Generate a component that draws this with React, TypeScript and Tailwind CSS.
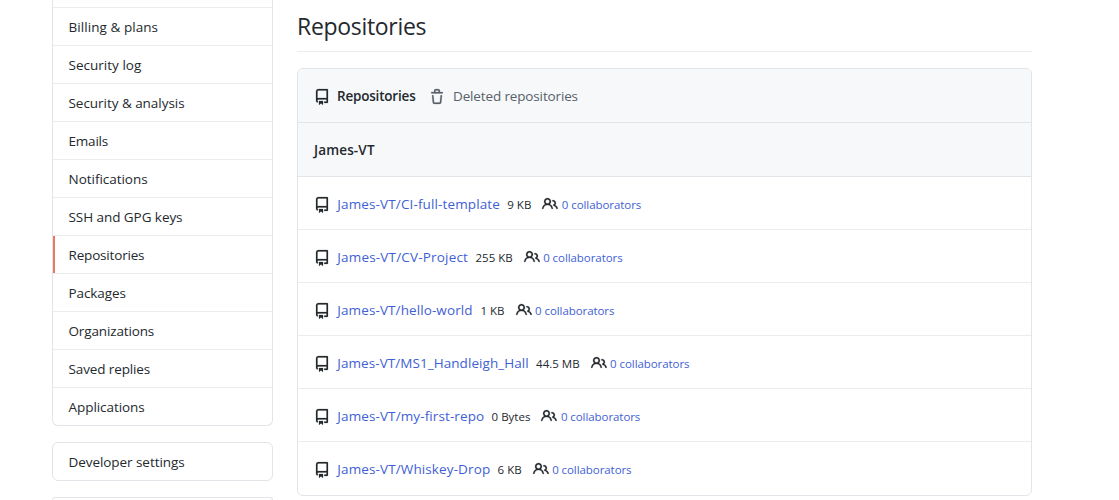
const menu = [
  { label: "Billing & plans", cls: "tracking-[0.06px]" },
  { label: "Security log", cls: "tracking-[0.02px]" },
  { label: "Security & analysis", cls: "tracking-[-0.04px]" },
  { label: "Emails", cls: "tracking-[-0.2px]" },
  { label: "Notifications", cls: "tracking-[-0.03px]" },
  { label: "SSH and GPG keys", cls: "tracking-[-0.06px]" },
  { label: "Repositories", cls: "tracking-[-0.18px]", active: true },
  { label: "Packages", cls: "tracking-[-0.08px]" },
  { label: "Organizations", cls: "tracking-[-0.14px]" },
  { label: "Saved replies", cls: "tracking-[-0.12px]" },
  { label: "Applications", cls: "tracking-[-0.06px]" },
];

const repos = [
  { name: "CI-full-template", size: "9 KB", cls: "w-[163.2px] tracking-[0.13px]" },
  { name: "CV-Project", size: "255 KB", cls: "w-[131.4px] tracking-[0.18px]" },
  { name: "hello-world", size: "1 KB", cls: "w-[136.4px] tracking-[0.1px]" },
  { name: "MS1_Handleigh_Hall", size: "44.5 MB", cls: "w-[192px] tracking-[0.06px]" },
  { name: "my-first-repo", size: "0 Bytes", cls: "w-[147.5px] tracking-[0.11px]" },
  { name: "Whiskey-Drop", size: "6 KB", cls: "w-[153.5px] tracking-[0.12px]" },
];

function Icon({ d, className = "" }: { d: string; className?: string }) {
  return (
    <svg viewBox="0 0 16 16" width="16" height="16" fill="currentColor" stroke="currentColor" strokeWidth="0.2" className={`shrink-0 overflow-visible ${className}`} aria-hidden="true">
      <path fillRule="evenodd" d={d} />
    </svg>
  );
}

const repoPath =
  "M2 2.5A2.5 2.5 0 014.5 0h8.75a.75.75 0 01.75.75v12.5a.75.75 0 01-.75.75h-2.5a.75.75 0 110-1.5h1.75v-2h-8a1 1 0 00-.714 1.7.75.75 0 01-1.072 1.05A2.495 2.495 0 012 11.5v-9zm10.5-1V9h-8c-.356 0-.694.074-1 .208V2.5a1 1 0 011-1h8zM5 12.25v3.25a.25.25 0 00.4.2l1.45-1.087a.25.25 0 01.3 0L8.6 15.7a.25.25 0 00.4-.2v-3.25a.25.25 0 00-.25-.25h-3.5a.25.25 0 00-.25.25z";
const trashPath =
  "M6.5 1.75a.25.25 0 01.25-.25h2.5a.25.25 0 01.25.25V3h-3V1.75zm4.5 0V3h2.25a.75.75 0 010 1.5H2.75a.75.75 0 010-1.5H5V1.75C5 .784 5.784 0 6.75 0h2.5C10.216 0 11 .784 11 1.75zM4.496 6.675a.75.75 0 10-1.492.15l.66 6.6A1.75 1.75 0 005.405 15h5.19c.9 0 1.652-.681 1.741-1.576l.66-6.6a.75.75 0 00-1.492-.149l-.66 6.6a.25.25 0 01-.249.225h-5.19a.25.25 0 01-.249-.225l-.66-6.6z";
const peoplePath =
  "M5.5 3.5a2 2 0 100 4 2 2 0 000-4zM2 5.5a3.5 3.5 0 115.898 2.549 5.507 5.507 0 013.034 4.084.75.75 0 11-1.482.235 4.001 4.001 0 00-7.9 0 .75.75 0 01-1.482-.236A5.507 5.507 0 013.102 8.05 3.49 3.49 0 012 5.5zM11 4a.75.75 0 100 1.5 1.5 1.5 0 01.666 2.844.75.75 0 00-.416.672v.352a.75.75 0 00.574.73c1.2.289 2.162 1.2 2.522 2.372a.75.75 0 101.434-.44 5.01 5.01 0 00-2.56-3.012A3 3 0 0011 4z";

function Sidebar() {
  return (
    <aside className="flex w-[221px] shrink-0 flex-col gap-4">
      <nav className="rounded-b-md border border-t-0 border-[#e1e4e8] pt-[7px]">
        {menu.map((item) => (
          <a key={item.label} className="flex h-[38px] items-center border-t border-[#eaecef]">
            <span className={`h-full w-0.5 ${item.active ? "bg-[#ec775c]" : ""}`} />
            <span className={`ml-[13.5px] pt-0.5 ${item.cls}`}>{item.label}</span>
          </a>
        ))}
      </nav>
      <nav className="flex h-[39px] items-center rounded-md border border-[#e1e4e8] pt-0.5 pl-[15.5px] tracking-[-0.06px]">
        Developer settings
      </nav>
      <div className="h-[3px] rounded-t-md border border-b-0 border-[#e1e4e8]" />
    </aside>
  );
}

export default function App() {
  return (
    <div className="flex h-[500px] gap-6 overflow-hidden bg-white pl-[52px] font-['Open_Sans','Noto_Sans',sans-serif] text-[13.5px] leading-[21px] text-[#24292e]">
      <Sidebar />
      <main className="w-[735px] shrink-0">
        <h2 className="flex h-[52px] items-center border-b border-[#eaecef] text-[23px] leading-9 tracking-[-0.31px]">
          Repositories
        </h2>
        <section className="mt-4 overflow-hidden rounded-md border border-[#e1e4e8]">
          <header className="flex h-[53px] items-center bg-[#f6f8fa] pt-0.5 pl-4">
            <Icon d={repoPath} />
            <span className="ml-[7px] w-[79px] font-semibold tracking-[-0.2px]">Repositories</span>
            <Icon d={trashPath} className="ml-[13px] text-[#586069]" />
            <span className="ml-2 tracking-[-0.14px] text-[#586069]">Deleted repositories</span>
          </header>
          <h3 className="flex h-[54px] items-center border-t border-[#e1e4e8] bg-[#f6f8fa] pt-0.5 pl-4 font-semibold tracking-[0.15px]">
            James-VT
          </h3>
          {repos.map((repo, i) => (
            <div
              key={repo.name}
              className={`flex h-[53px] items-center border-t pt-0.5 pl-4 last:h-[54px] last:pt-px ${i === 0 ? "border-[#e1e4e8]" : "border-[#eaecef]"}`}
            >
              <Icon d={repoPath} className="mt-0.5" />
              <a className={`ml-[7.3px] shrink-0 whitespace-nowrap text-[#3f5fd4] ${repo.cls}`}>James-VT/{repo.name}</a>
              <small className="ml-[6.8px] text-[11.5px]">{repo.size}</small>
              <Icon d={peoplePath} className="ml-[11px]" />
              <a className="ml-[3.5px] text-[11.5px] tracking-[-0.07px] text-[#3f5fd4]">0 collaborators</a>
            </div>
          ))}
        </section>
      </main>
    </div>
  );
}
